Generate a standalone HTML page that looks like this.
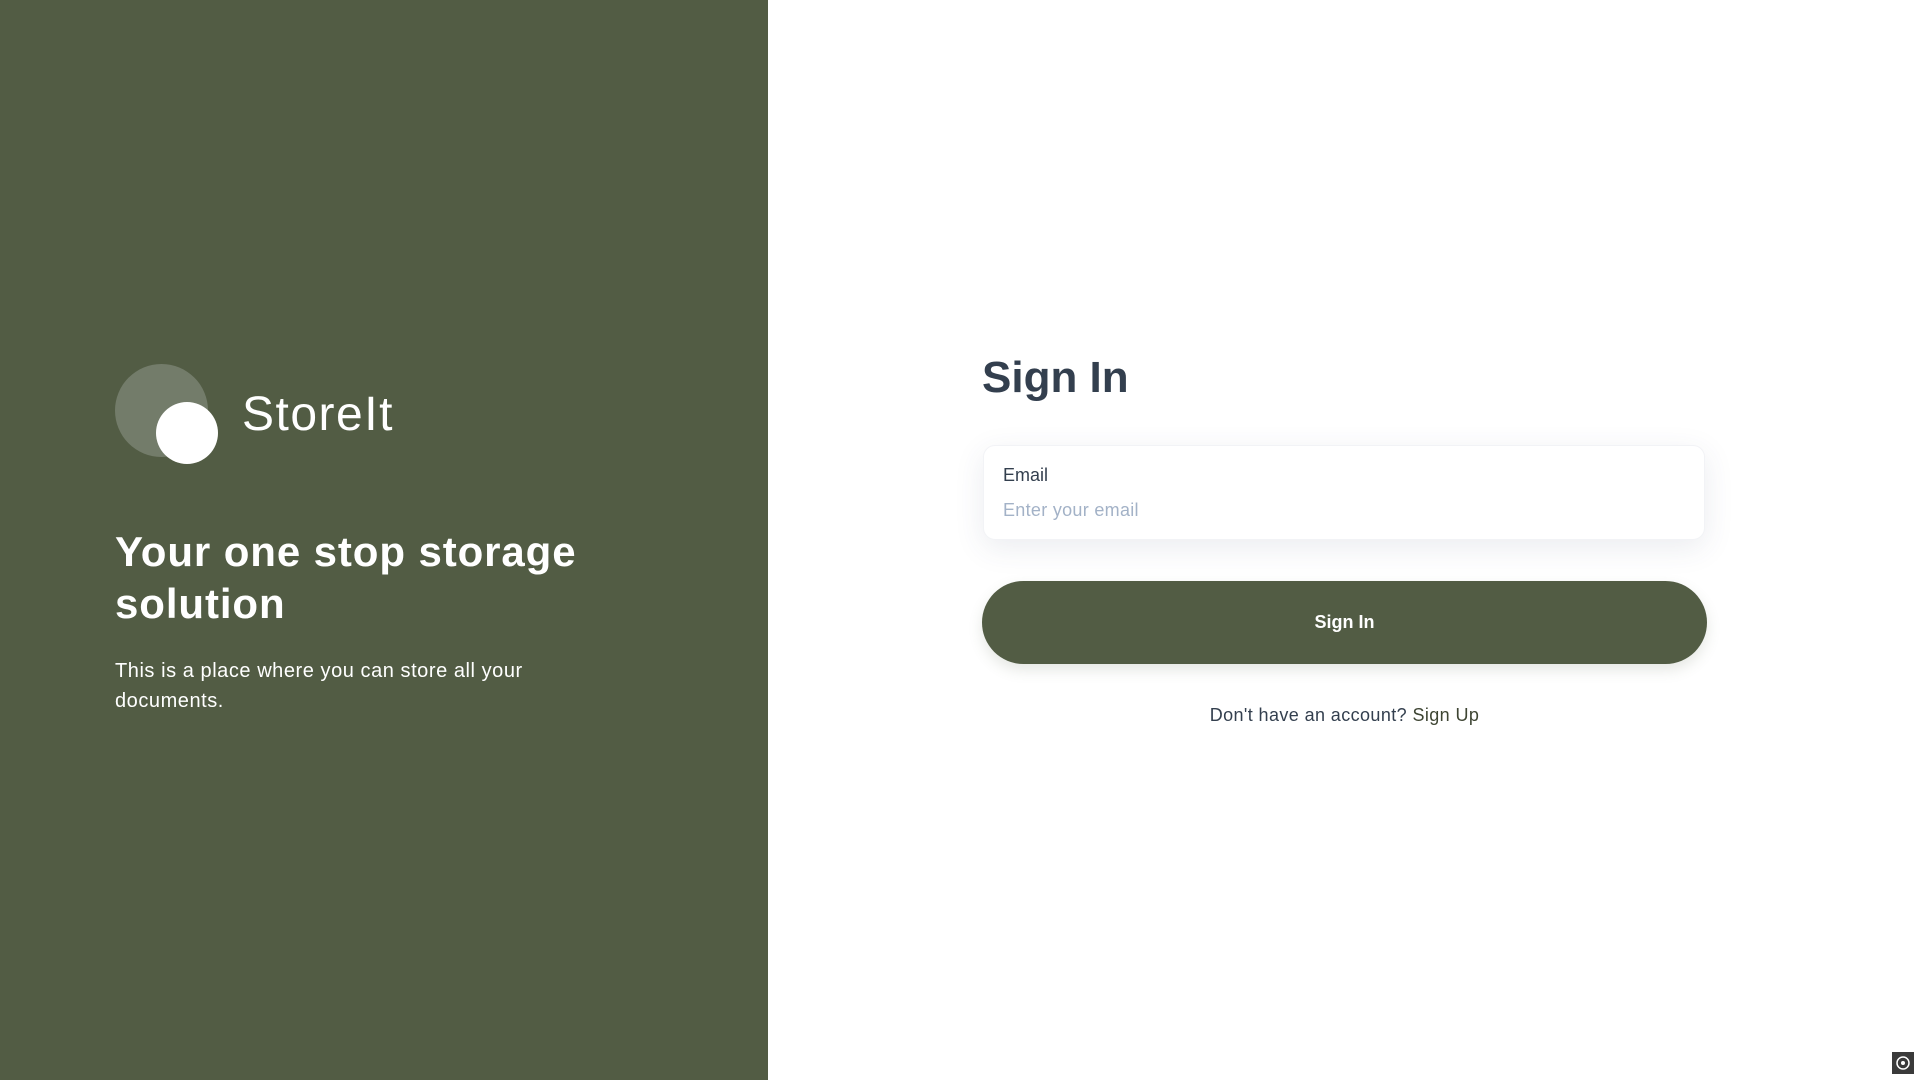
<!DOCTYPE html>
<html><head><meta charset="utf-8"><style>
*{margin:0;padding:0;box-sizing:border-box}
body{width:1920px;height:1080px;position:relative;background:#fff;font-family:"Liberation Sans",sans-serif;overflow:hidden}
.left{position:absolute;left:0;top:0;width:768px;height:1080px;background:#525c44;color:#fff}
.c1{position:absolute;left:115px;top:364px;width:93px;height:93px;border-radius:50%;background:#737c6a}
.c2{position:absolute;left:156px;top:402px;width:62px;height:62px;border-radius:50%;background:#fff}
.logo{position:absolute;left:242px;top:385px;font-size:48px;line-height:60px;letter-spacing:1.5px}
h1{position:absolute;left:115px;top:526px;font-size:42px;line-height:52px;font-weight:700;width:620px;letter-spacing:0.9px}
.p{position:absolute;left:115px;top:657px;font-size:20px;line-height:29.5px;width:520px;letter-spacing:0.55px}
.title{position:absolute;left:982px;top:351px;font-size:44px;font-weight:700;color:#333f4e;line-height:54px}
.card{position:absolute;left:983px;top:445px;width:722px;height:95px;border-radius:12px;background:#fff;box-shadow:0 8px 30px rgba(60,70,110,0.1);border:1px solid #f2f3f6}
.lab{position:absolute;left:19px;top:19px;font-size:18px;color:#333f4e}
.ph{position:absolute;left:19px;top:54px;font-size:18px;color:#a3b2c7;letter-spacing:0.3px}
.btn{position:absolute;left:982px;top:581px;width:725px;height:83px;border-radius:42px;background:#525c44;color:#fff;font-size:18px;font-weight:700;text-align:center;line-height:83px;box-shadow:0 6px 14px rgba(82,92,68,0.15)}
.bot{position:absolute;left:982px;width:725px;top:705px;text-align:center;font-size:18px;color:#333f4e;letter-spacing:0.4px}
.bot span{color:#3e4533}
.ic{position:absolute;left:1892px;top:1052px;width:22px;height:22px;background:#3a3a3a}
</style></head><body>
<div class="left">
<div class="c1"></div><div class="c2"></div>
<div class="logo">StoreIt</div>
<h1>Your one stop storage solution</h1>
<div class="p">This is a place where you can store all your documents.</div>
</div>
<div class="title">Sign In</div>
<div class="card"><div class="lab">Email</div><div class="ph">Enter your email</div></div>
<div class="btn">Sign In</div>
<div class="bot">Don't have an account? <span>Sign Up</span></div>
<div class="ic"><svg width="22" height="22"><circle cx="11" cy="11" r="6" fill="none" stroke="#fff" stroke-width="1.5"/><circle cx="11" cy="11" r="2" fill="#fff"/></svg></div>
</body></html>
